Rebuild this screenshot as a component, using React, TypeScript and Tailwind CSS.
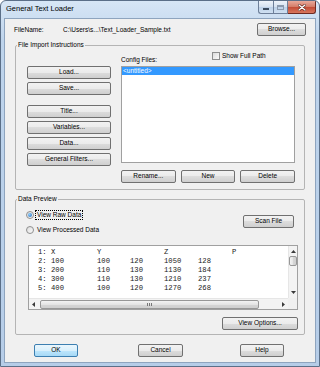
import React from "react";

const btn =
  "h-[13px] flex items-center justify-center rounded-[2px] border border-[#707070] bg-[linear-gradient(#f2f2f2,#ebebeb_50%,#dddddd_50%,#cfcfcf)] leading-none whitespace-nowrap";

const Button: React.FC<{ label: string; className?: string; primary?: boolean }> = ({ label, className = "", primary }) => (
  <div
    className={
      primary
        ? "h-[13px] flex items-center justify-center rounded-[2px] border border-[#3c7fb1] bg-[linear-gradient(#eaf6fd,#d9f0fc_50%,#bee6fd_50%,#a7d9f5)] leading-none whitespace-nowrap " + className
        : btn + " " + className
    }
  >
    {label}
  </div>
);

const Arrow: React.FC<{ dir: "up" | "down" | "left" | "right" }> = ({ dir }) => {
  const pts = {
    up: "0,3 2.5,0 5,3",
    down: "0,0 2.5,3 5,0",
    left: "3,0 0,2.5 3,5",
    right: "0,0 3,2.5 0,5",
  }[dir];
  const vertical = dir === "up" || dir === "down";
  return (
    <svg width={vertical ? 5 : 3} height={vertical ? 3 : 5} viewBox={vertical ? "0 0 5 3" : "0 0 3 5"}>
      <polygon points={pts} fill="#3a3a3a" />
    </svg>
  );
};

const rows = [
  ["1:", "X", "Y", "", "Z", "", "P"],
  ["2:", "100", "100", "120", "1050", "128", ""],
  ["3:", "200", "110", "130", "1130", "184", ""],
  ["4:", "300", "110", "130", "1210", "237", ""],
  ["5:", "400", "100", "120", "1270", "268", ""],
];

export default function App() {
  return (
    <div className="w-[320px] h-[367px] overflow-hidden rounded-t-[6px] border border-[#5b6f88] bg-[linear-gradient(#d7e6f6,#bed4ec_40px,#b6cde8)] flex flex-col font-['Liberation_Sans',Arial,sans-serif] text-[6.5px] text-black">
      {/* title bar */}
      <div className="h-[17px] flex items-start shrink-0">
        <span className="ml-[5px] mt-[3px] text-[7.5px] leading-[9px]">General Text Loader</span>
        <div className="ml-auto mr-[3px] flex">
          <div className="w-[15px] h-[13px] flex items-center justify-center rounded-bl-[3px] border border-r-0 border-t-0 border-[#6d7f99] bg-[linear-gradient(#eef3fa,#d4e1f0_50%,#bcd0e7_50%,#cfe0f2)]">
            <div className="w-[6px] h-[2px] mt-[4px] bg-white border-[0.5px] border-[#3b4a5e]" />
          </div>
          <div className="w-[15px] h-[13px] flex items-center justify-center border border-t-0 border-[#6d7f99] bg-[linear-gradient(#eef3fa,#d4e1f0_50%,#bcd0e7_50%,#cfe0f2)]">
            <div className="w-[7px] h-[5px] border border-[#8a99ad] border-t-2 bg-transparent" />
          </div>
          <div className="w-[28px] h-[13px] flex items-center justify-center rounded-br-[3px] border border-l-0 border-t-0 border-[#6e2a22] bg-[linear-gradient(#e9a99b,#d47a66_50%,#c24a35_50%,#d7765d)]">
            <svg width="8" height="7" viewBox="0 0 8 7">
              <path d="M1 1 L7 6 M7 1 L1 6" stroke="#5a1f16" strokeWidth="2.6" strokeLinecap="round" />
              <path d="M1 1 L7 6 M7 1 L1 6" stroke="#ffffff" strokeWidth="1.4" strokeLinecap="round" />
            </svg>
          </div>
        </div>
      </div>

      {/* client area */}
      <div className="flex-1 mx-[3px] mb-[3px] border border-[#8ea4be] bg-[#f0f0f0] flex flex-col">
        <div className="mt-[4px] h-[13px] flex items-center pl-[9px]">
          <span className="w-[49px]">FileName:</span>
          <span>C:\Users\s...\Text_Loader_Sample.txt</span>
          <Button label="Browse..." className="ml-auto mr-[9px] w-[49px]" />
        </div>

        <fieldset className="mt-[5px] mx-[10px] border border-[#b4b4b4] rounded-[2px] pt-[1px] pb-[6px]">
          <legend className="ml-[1px] px-[1px] leading-[8px]">File Import Instructions</legend>
          <div className="flex pl-[11px]">
            <div className="w-[84px] pt-[16px] flex flex-col">
              <Button label="Load..." />
              <Button label="Save..." className="mt-[3px]" />
              <Button label="Title..." className="mt-[10px]" />
              <Button label="Variables..." className="mt-[3px]" />
              <Button label="Data..." className="mt-[3px]" />
              <Button label="General Filters..." className="mt-[3px]" />
            </div>
            <div className="ml-[10px] w-[174px] flex flex-col">
              <div className="h-[16px] flex">
                <span className="w-[91px] self-end leading-[8px] mb-[2px]">Config Files:</span>
                <div className="self-start mt-[2px] flex items-center">
                  <div className="w-[8px] h-[8px] border border-[#8e8f8f] bg-[linear-gradient(135deg,#dcdcdc,#fbfbfb)]" />
                  <span className="ml-[2px] leading-[8px]">Show Full Path</span>
                </div>
              </div>
              <div className="h-[97px] border border-[#a0a0a0] bg-white">
                <div className="h-[8px] bg-[#3399ff] text-white leading-[8px] pl-[1px]">&lt;untitled&gt;</div>
              </div>
              <div className="mt-[7px] flex gap-[5px]">
                <Button label="Rename..." className="flex-1" />
                <Button label="New" className="flex-1" />
                <Button label="Delete" className="flex-1" />
              </div>
            </div>
          </div>
        </fieldset>

        <fieldset className="mt-[5px] mx-[10px] border border-[#b4b4b4] rounded-[2px] pt-[1px] pb-[4px] flex flex-col">
          <legend className="ml-[1px] px-[1px] leading-[8px]">Data Preview</legend>
          <div className="flex">
            <div className="pl-[10px] pt-[6px] flex flex-col">
              <div className="h-[10px] flex items-center">
                <div className="w-[8px] h-[8px] rounded-full border border-[#8e8f8f] bg-[linear-gradient(135deg,#dcdcdc,#fbfbfb)] flex items-center justify-center">
                  <div className="w-[4px] h-[4px] rounded-full bg-[radial-gradient(circle_at_35%_35%,#8fd0ff,#1c62b4)]" />
                </div>
                <span className="ml-[1px] px-[1px] leading-[8px] border border-dotted border-black">View Raw Data</span>
              </div>
              <div className="h-[10px] mt-[5px] flex items-center">
                <div className="w-[8px] h-[8px] rounded-full border border-[#8e8f8f] bg-[linear-gradient(135deg,#dcdcdc,#fbfbfb)]" />
                <span className="ml-[2px] px-[1px] leading-[8px]">View Processed Data</span>
              </div>
            </div>
            <Button label="Scan File" className="ml-auto mr-[10px] mt-[11px] w-[51px]" />
          </div>

          <div className="mt-[10px] ml-[12px] w-[270px] h-[65px] border border-[#a0a0a0] bg-white flex flex-col">
            <div className="h-[52px] flex">
              <div className="flex-1 pl-[9px] pt-[2px] font-['Liberation_Mono','Courier_New',monospace] text-[7.2px] leading-[9px] text-[#222]">
                {rows.map((r, i) => (
                  <div key={i} className="grid grid-cols-[13px_46px_33px_34px_34px_34px_20px] whitespace-pre">
                    {r.map((c, j) => (
                      <span key={j}>{c}</span>
                    ))}
                  </div>
                ))}
              </div>
              <div className="w-[9px] bg-[#f3f3f3] border-l border-[#e6e6e6] flex flex-col items-center">
                <div className="mt-[4px]">
                  <Arrow dir="up" />
                </div>
                <div className="mt-[3px] w-[8px] h-[10px] rounded-[2px] border border-[#979797] bg-[linear-gradient(90deg,#f3f3f3,#e4e4e4_50%,#d6d6d6_50%,#cfcfcf)]" />
                <div className="mt-auto mb-[4px]">
                  <Arrow dir="down" />
                </div>
              </div>
            </div>
            <div className="h-[11px] flex">
              <div className="flex-1 bg-[#f3f3f3] border-t border-[#e6e6e6] flex items-center">
                <div className="ml-[3px]">
                  <Arrow dir="left" />
                </div>
                <div className="ml-[5px] w-[219px] h-[9px] rounded-[2px] border border-[#979797] bg-[linear-gradient(#f3f3f3,#e4e4e4_50%,#d6d6d6_50%,#cfcfcf)] flex items-center justify-center gap-[1px]">
                  <div className="w-[1px] h-[3px] bg-[#777]" />
                  <div className="w-[1px] h-[3px] bg-[#777]" />
                  <div className="w-[1px] h-[3px] bg-[#777]" />
                </div>
                <div className="ml-auto mr-[3px]">
                  <Arrow dir="right" />
                </div>
              </div>
              <div className="w-[9px] bg-[#f0f0f0]" />
            </div>
          </div>

          <Button label="View Options..." className="mt-[7px] self-end mr-[6px] w-[76px]" />
        </fieldset>

        <div className="mt-[9px] flex">
          <Button label="OK" primary className="ml-[29px] w-[44px]" />
          <Button label="Cancel" className="ml-[60px] w-[45px]" />
          <Button label="Help" className="ml-[57px] w-[44px]" />
        </div>
      </div>
    </div>
  );
}
